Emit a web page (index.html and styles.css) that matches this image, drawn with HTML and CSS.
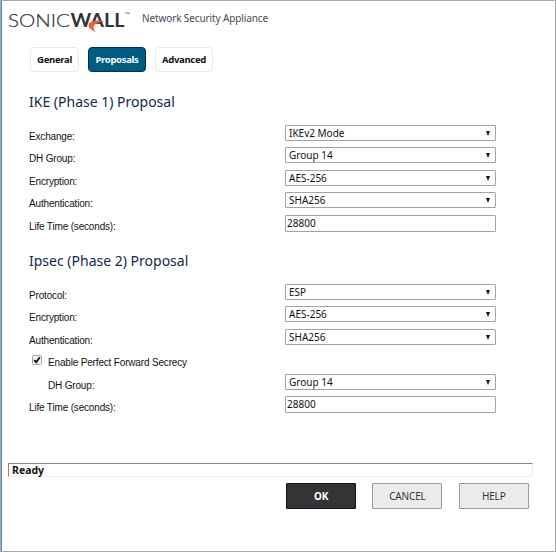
FILE: index.html
```html
<!DOCTYPE html>
<html lang="en">
<head>
<meta charset="utf-8">
<title>Network Security Appliance</title>
<link rel="stylesheet" href="styles.css">
</head>
<body>
<div class="window">
  <header class="header">
    <svg class="logo" width="124" height="24" viewBox="0 0 124 24">
      <text class="logo-light" x="-1" y="17.500" textLength="62" lengthAdjust="spacingAndGlyphs">SONIC</text>
      <text class="logo-bold" x="61.500" y="17.500" textLength="54" lengthAdjust="spacingAndGlyphs">WALL</text>
      <path d="M95.500 12.200C88 10.500 79.500 12.500 79.500 16.500C79.500 19.500 83.500 21.500 86.500 23C85 20.500 83.500 18.500 85 16.500C86.500 14.500 90.500 12.500 95.500 12.200Z" fill="#f26222"/>
      <text class="logo-tm" x="116" y="7" textLength="5" lengthAdjust="spacingAndGlyphs">™</text>
    </svg>
    <span class="product">Network Security Appliance</span>
  </header>

  <nav class="tabs">
    <button class="tab tab-general">General</button>
    <button class="tab tab-proposals active">Proposals</button>
    <button class="tab tab-advanced">Advanced</button>
  </nav>

  <main>
    <section class="section">
      <h2>IKE (Phase 1) Proposal</h2>
      <div class="row"><span class="label">Exchange:</span><div class="select">IKEv2 Mode<i class="arrow"></i></div></div>
      <div class="row"><span class="label">DH Group:</span><div class="select">Group 14<i class="arrow"></i></div></div>
      <div class="row"><span class="label">Encryption:</span><div class="select">AES-256<i class="arrow"></i></div></div>
      <div class="row"><span class="label">Authentication:</span><div class="select">SHA256<i class="arrow"></i></div></div>
      <div class="row"><span class="label">Life Time (seconds):</span><div class="input">28800</div></div>
    </section>
    <section class="section">
      <h2>Ipsec (Phase 2) Proposal</h2>
      <div class="row"><span class="label">Protocol:</span><div class="select">ESP<i class="arrow"></i></div></div>
      <div class="row"><span class="label">Encryption:</span><div class="select">AES-256<i class="arrow"></i></div></div>
      <div class="row"><span class="label">Authentication:</span><div class="select">SHA256<i class="arrow"></i></div></div>
      <div class="row"><svg class="checkbox" width="10" height="10" viewBox="0 0 10 10"><rect x=".5" y=".5" width="9" height="9" rx="1" fill="#f4f4f4" stroke="#a5a5a5"/><path d="M2.200 5L4.200 7.200L7.800 2.200" fill="none" stroke="#111" stroke-width="1.800"/></svg><span class="label check-label">Enable Perfect Forward Secrecy</span></div>
      <div class="row"><span class="label indent">DH Group:</span><div class="select">Group 14<i class="arrow"></i></div></div>
      <div class="row"><span class="label">Life Time (seconds):</span><div class="input">28800</div></div>
    </section>
  </main>

  <footer>
    <div class="status">Ready</div>
    <div class="actions">
      <button class="button primary">OK</button>
      <button class="button">CANCEL</button>
      <button class="button">HELP</button>
    </div>
  </footer>
</div>
</body>
</html>
```
FILE: styles.css
```css
* {
  box-sizing: border-box;
}

body {
  margin: 0;
  background: #fff;
  font-family: "Liberation Sans", Arial, sans-serif;
  font-size: 10px;
  color: #111;
}

.window {
  height: 552px;
  border: 1px solid #a9a9a9;
  box-shadow: inset 1px 0 #5b8ed0;
  overflow: hidden;
}

.header {
  display: flex;
  height: 46px;
  padding: 8px 0 0 8px;
}

.logo {
  flex: none;
  overflow: visible;
}

.logo text {
  fill: #30343c;
  font-family: Lato, sans-serif;
  font-size: 18.500px;
}

.logo .logo-light {
  font-weight: 300;
  stroke: #30343c;
  stroke-width: .2px;
}

.logo .logo-bold {
  font-weight: 700;
}

.logo .logo-tm {
  font-size: 5px;
}

.product {
  margin-left: 9px;
  font: 10px/19px "Noto Sans", sans-serif;
  letter-spacing: -.12px;
  color: #444b57;
  white-space: nowrap;
}

.tabs {
  display: flex;
  height: 25px;
  padding-left: 29px;
  gap: 9px;
}

.tab {
  height: 25px;
  padding: 0;
  border: 1px solid #e9e9e9;
  border-radius: 4px;
  background: #fff;
  font: 700 9.500px/22px "Noto Sans", sans-serif;
  letter-spacing: -.3px;
  color: #111;
}

.tab-general {
  width: 49px;
}

.tab-proposals {
  width: 58px;
}

.tab-advanced {
  width: 58px;
}

.tab.active {
  border-color: #0a2d52;
  background: #005b82;
  color: #fff;
}

.section {
  height: 159px;
  padding: 20px 0 0 28px;
}

h2 {
  height: 33px;
  margin: 0;
  font: 400 14px/19px "Noto Sans", sans-serif;
  color: #12294a;
}

.row {
  display: flex;
  height: 22.400px;
}

.label {
  width: 256px;
  padding-top: 5px;
  line-height: 13px;
  letter-spacing: -.17px;
  white-space: nowrap;
}

.indent {
  padding-left: 19px;
}

.checkbox {
  flex: none;
  margin: 4px 0 0 3px;
}

.check-label {
  margin-left: 6px;
}

.select,
.input {
  position: relative;
  width: 211px;
  height: 16px;
  padding-left: 3px;
  border: 1px solid #a3a3a3;
  border-radius: 1px;
  font: 10px/14px "Noto Sans", sans-serif;
}

.input {
  height: 17px;
  padding-left: 1px;
  line-height: 15px;
}

.arrow {
  position: absolute;
  right: 5px;
  top: 5px;
  border: solid transparent;
  border-width: 5px 2.500px 0;
  border-top-color: #111;
}

footer {
  margin-top: 73px;
}

.status {
  width: 525px;
  height: 14px;
  margin-left: 7px;
  padding-left: 3px;
  border: 1px solid #ededed;
  border-top-color: #858585;
  border-left-color: #858585;
  font: 700 10.500px/13px "Noto Sans", sans-serif;
}

.actions {
  display: flex;
  gap: 16.400px;
  margin: 6px 0 0 285px;
}

.button {
  width: 70px;
  height: 26px;
  padding: 0;
  border: 1px solid #999;
  border-radius: 1px;
  background: #ebebeb;
  font: 10px/24px "Noto Sans", sans-serif;
  letter-spacing: -.15px;
  color: #333;
}

.button.primary {
  border-color: #111;
  background: #323436;
  font-weight: 700;
  color: #fff;
}
```
